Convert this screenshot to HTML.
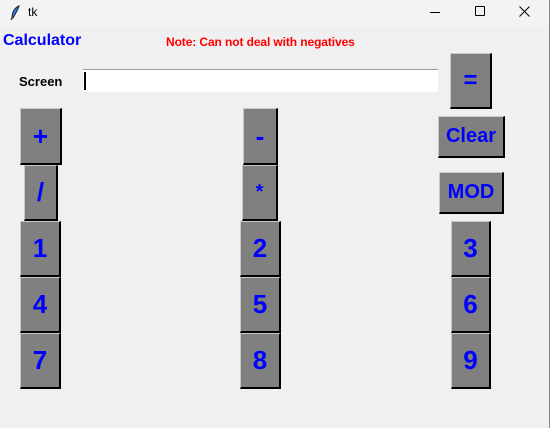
<!DOCTYPE html>
<html><head><style>
body{margin:0;width:550px;height:428px;overflow:hidden;background:#f0f0f0;font-family:"Liberation Sans",Arial,sans-serif;position:relative}
.tb{position:absolute;left:0;top:0;width:550px;height:26px;background:#f3f3f3}
.b{position:absolute;background:#808080;border-top:1px solid #c8c8c8;border-left:1px solid #c8c8c8;border-right:2px solid #000;border-bottom:2px solid #000;box-sizing:border-box;color:#0000ff;font-weight:bold;display:flex;align-items:center;justify-content:center;font-size:26px}
.t{position:absolute;white-space:nowrap}
</style></head><body>
<div class="tb">
<svg style="position:absolute;left:9px;top:5px" width="12" height="16" viewBox="0 0 12 16"><path d="M10 1 C5 3 3 8 3 13 L4 13 C6 9 9 5 10 1Z" fill="#3a7bd5" stroke="#123" stroke-width="1"/><path d="M3 13 L2 15" stroke="#123" stroke-width="1.2"/></svg>
<div class="t" style="left:28px;top:5px;font-size:12px;color:#000">tk</div>
<div style="position:absolute;left:430px;top:12px;width:10px;height:1px;background:#000"></div>
<div style="position:absolute;left:475px;top:6px;width:8px;height:8px;border:1px solid #000;border-radius:1px"></div>
<svg style="position:absolute;left:519px;top:6px" width="11" height="11"><path d="M0.5 0.5L10.5 10.5M10.5 0.5L0.5 10.5" stroke="#000" stroke-width="1"/></svg>
</div>
<div class="t" style="left:3px;top:32px;font-size:16px;font-weight:bold;color:#0000ff">Calculator</div>
<div class="t" style="left:166px;top:35px;font-size:12px;font-weight:bold;color:#ff0000;letter-spacing:-0.1px">Note: Can not deal with negatives</div>
<div class="t" style="left:19px;top:74px;font-size:13px;font-weight:bold;color:#000">Screen</div>
<div style="position:absolute;left:83px;top:69px;width:355px;height:23px;background:#fff;border-top:1px solid #999;box-sizing:border-box"></div>
<div style="position:absolute;left:84px;top:72px;width:2px;height:18px;background:#000"></div>
<div class="b" style="left:450px;top:53px;width:42px;height:56px;font-size:24px">=</div>
<div class="b" style="left:20px;top:108px;width:42px;height:57px">+</div>
<div class="b" style="left:24px;top:165px;width:34px;height:56px">/</div>
<div class="b" style="left:20px;top:221px;width:41px;height:56px">1</div>
<div class="b" style="left:20px;top:277px;width:41px;height:56px">4</div>
<div class="b" style="left:20px;top:333px;width:41px;height:56px">7</div>
<div class="b" style="left:243px;top:108px;width:35px;height:57px">-</div>
<div class="b" style="left:242px;top:165px;width:36px;height:56px;font-size:20px">*</div>
<div class="b" style="left:240px;top:221px;width:41px;height:56px">2</div>
<div class="b" style="left:240px;top:277px;width:41px;height:56px">5</div>
<div class="b" style="left:240px;top:333px;width:41px;height:56px">8</div>
<div class="b" style="left:438px;top:116px;width:67px;height:42px;font-size:20px">Clear</div>
<div class="b" style="left:439px;top:172px;width:65px;height:42px;font-size:20px">MOD</div>
<div class="b" style="left:451px;top:221px;width:40px;height:56px">3</div>
<div class="b" style="left:451px;top:277px;width:40px;height:56px">6</div>
<div class="b" style="left:451px;top:333px;width:40px;height:56px">9</div>
<div style="position:absolute;right:0;top:0;width:1px;height:428px;background:#888"></div>
</body></html>
